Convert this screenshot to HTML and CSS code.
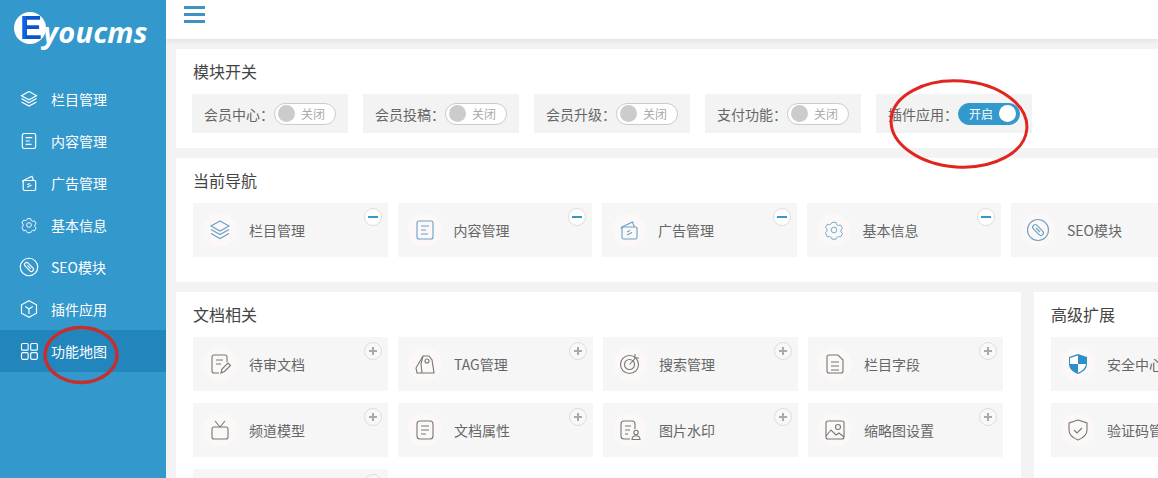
FILE: index.html
```html
<!DOCTYPE html>
<html lang="zh-CN">
<head>
<meta charset="utf-8">
<title>Eyoucms</title>
<link rel="stylesheet" href="styles.css">
</head>
<body>
<svg class="defs" width="0" height="0">
  <symbol id="i-layers" viewBox="0 0 24 24"><path d="M12 3 21 8 12 13 3 8Z"/><path d="M3 11.500 12 16.500 21 11.500"/><path d="M3 15.500 12 20.500 21 15.500"/></symbol>
  <symbol id="i-doc" viewBox="0 0 24 24"><rect x="4" y="3" width="16" height="18" rx="2"/><path d="M8 8h8M8 12h5M8 16h7"/></symbol>
  <symbol id="i-ad" viewBox="0 0 24 24"><path d="M4 9.500 15.500 4l2 5"/><path d="M4 9.500 5 11"/><rect x="5" y="9" width="15" height="12" rx="1.500"/><path d="M10 17l5-2.500M10 14l3-1.500"/></symbol>
  <symbol id="i-gear" viewBox="0 0 24 24"><g transform="translate(2.400 2.400) scale(.8)"><path d="M9.500 3h5l.8 2.600 2.300 1.300 2.700-.6 2.400 4.200-1.900 1.500v3l1.900 2-2.400 4.200-2.700-.6-2.300 1.300-.8 2.100h-5l-.8-2.100-2.300-1.300-2.700.6L1.300 16l1.900-2v-3l-1.900-1.500 2.400-4.200 2.700.6 2.300-1.300Z" transform="translate(0 -.5)"/><circle cx="12" cy="12" r="3.500"/></g></symbol>
  <symbol id="i-seo" viewBox="0 0 24 24"><circle cx="12" cy="12" r="10.500"/><rect x="5.500" y="9.500" width="13" height="5" rx="2.500" transform="rotate(45 12 12)"/><path d="M10 10l4 4"/></symbol>
  <symbol id="i-cube" viewBox="0 0 24 24"><path d="M12 2 21 7v10l-9 5-9-5V7Z"/><path d="M7.500 9 12 12l4.500-3M12 12v6"/></symbol>
  <symbol id="i-grid" viewBox="0 0 24 24"><rect x="3" y="3" width="8" height="8" rx="1.500"/><rect x="14" y="3" width="8" height="8" rx="1.500"/><rect x="3" y="14" width="8" height="8" rx="1.500"/><rect x="14" y="14" width="8" height="8" rx="1.500"/></symbol>
  <symbol id="i-edit" viewBox="0 0 24 24"><path d="M11 21H6a2 2 0 0 1-2-2V5a2 2 0 0 1 2-2h11a2 2 0 0 1 2 2v5"/><path d="M8 8h7M8 12h5"/><path d="M13 21l1-4 6-6 2.500 2.500-6 6Z"/></symbol>
  <symbol id="i-tag" viewBox="0 0 24 24"><path d="M10 4h6l3 4 2 13H4L3 16Z"/><circle cx="14" cy="9" r="2"/><path d="M10 4 8 12l1 9"/></symbol>
  <symbol id="i-target" viewBox="0 0 24 24"><circle cx="11.500" cy="12.500" r="9"/><circle cx="11.500" cy="12.500" r="5"/><path d="M11.500 12.500 18 5.500M17 2v4h4"/></symbol>
  <symbol id="i-file" viewBox="0 0 24 24"><path d="M6 3h9l5 5v11a2 2 0 0 1-2 2H6a2 2 0 0 1-2-2V5a2 2 0 0 1 2-2Z"/><path d="M8 10h8M8 14h8M8 18h8"/></symbol>
  <symbol id="i-tv" viewBox="0 0 24 24"><rect x="4" y="9" width="16" height="12" rx="2"/><path d="M7 3l5 6 5-6"/></symbol>
  <symbol id="i-attr" viewBox="0 0 24 24"><rect x="4" y="3" width="16" height="18" rx="3"/><path d="M8 8h8M8 12h8M8 16h5"/></symbol>
  <symbol id="i-mark" viewBox="0 0 24 24"><path d="M12 21H6a3 3 0 0 1-3-3V6a3 3 0 0 1 3-3h8a3 3 0 0 1 3 3v5"/><path d="M7 8h6M7 12h5M7 16h3"/><circle cx="18" cy="14.500" r="2.200"/><path d="M14 21.500c0-5 8-5 8 0Z"/></symbol>
  <symbol id="i-image" viewBox="0 0 24 24"><rect x="3" y="3" width="18" height="18" rx="2"/><circle cx="15" cy="9" r="2.500"/><path d="M3 18l5-6 5 5 3-2 5 4"/></symbol>
  <symbol id="i-check" viewBox="0 0 24 24"><path d="M12 2 21 5v7c0 5-4 8-9 10-5-2-9-5-9-10V5Z"/><path d="M8 12l3 3 5-5"/></symbol>
</svg>

<div class="app">
  <aside class="sidebar">
    <div class="logo"><span class="logo-circle"><span class="logo-e">E</span></span><span class="logo-text">youcms</span></div>
    <nav class="menu">
      <a class="menu-item"><svg class="menu-icon"><use href="#i-layers"/></svg>栏目管理</a>
      <a class="menu-item"><svg class="menu-icon"><use href="#i-doc"/></svg>内容管理</a>
      <a class="menu-item"><svg class="menu-icon"><use href="#i-ad"/></svg>广告管理</a>
      <a class="menu-item"><svg class="menu-icon"><use href="#i-gear"/></svg>基本信息</a>
      <a class="menu-item"><svg class="menu-icon"><use href="#i-seo"/></svg>SEO模块</a>
      <a class="menu-item"><svg class="menu-icon"><use href="#i-cube"/></svg>插件应用</a>
      <a class="menu-item active"><svg class="menu-icon"><use href="#i-grid"/></svg>功能地图</a>
    </nav>
  </aside>

  <main class="main">
    <header class="topbar"><span class="burger"><i></i><i></i><i></i></span></header>
    <div class="content">
      <section class="panel panel-switch">
        <h2 class="title">模块开关</h2>
        <div class="switch-row">
          <div class="switch-item">会员中心：<span class="toggle"><b></b>关闭</span></div>
          <div class="switch-item">会员投稿：<span class="toggle"><b></b>关闭</span></div>
          <div class="switch-item">会员升级：<span class="toggle"><b></b>关闭</span></div>
          <div class="switch-item">支付功能：<span class="toggle"><b></b>关闭</span></div>
          <div class="switch-item">插件应用：<span class="toggle on">开启<b></b></span></div>
        </div>
      </section>

      <section class="panel panel-nav">
        <h2 class="title">当前导航</h2>
        <div class="cards blue">
          <div class="card"><span class="badge minus"></span><span class="circle"><svg class="card-icon"><use href="#i-layers"/></svg></span>栏目管理</div>
          <div class="card"><span class="badge minus"></span><span class="circle"><svg class="card-icon"><use href="#i-doc"/></svg></span>内容管理</div>
          <div class="card"><span class="badge minus"></span><span class="circle"><svg class="card-icon"><use href="#i-ad"/></svg></span>广告管理</div>
          <div class="card"><span class="badge minus"></span><span class="circle"><svg class="card-icon"><use href="#i-gear"/></svg></span>基本信息</div>
          <div class="card"><span class="badge minus"></span><span class="circle"><svg class="card-icon"><use href="#i-seo"/></svg></span>SEO模块</div>
        </div>
      </section>

      <div class="split">
        <section class="panel panel-docs">
          <h2 class="title">文档相关</h2>
          <div class="cards">
            <div class="card"><span class="badge plus"></span><span class="circle"><svg class="card-icon"><use href="#i-edit"/></svg></span>待审文档</div>
            <div class="card"><span class="badge plus"></span><span class="circle"><svg class="card-icon"><use href="#i-tag"/></svg></span>TAG管理</div>
            <div class="card"><span class="badge plus"></span><span class="circle"><svg class="card-icon"><use href="#i-target"/></svg></span>搜索管理</div>
            <div class="card"><span class="badge plus"></span><span class="circle"><svg class="card-icon"><use href="#i-file"/></svg></span>栏目字段</div>
            <div class="card"><span class="badge plus"></span><span class="circle"><svg class="card-icon"><use href="#i-tv"/></svg></span>频道模型</div>
            <div class="card"><span class="badge plus"></span><span class="circle"><svg class="card-icon"><use href="#i-attr"/></svg></span>文档属性</div>
            <div class="card"><span class="badge plus"></span><span class="circle"><svg class="card-icon"><use href="#i-mark"/></svg></span>图片水印</div>
            <div class="card"><span class="badge plus"></span><span class="circle"><svg class="card-icon"><use href="#i-image"/></svg></span>缩略图设置</div>
            <div class="card"><span class="badge plus"></span><span class="circle"></span></div>
          </div>
        </section>
        <section class="panel panel-adv">
          <h2 class="title">高级扩展</h2>
          <div class="cards">
            <div class="card"><span class="circle"><svg class="card-icon shield" viewBox="0 0 24 24"><path class="s-blue" d="M12 2 21 5v7c0 5-4 8-9 10-5-2-9-5-9-10V5Z"/><path class="s-white" d="M12 3.500v8.500H4V6ZM12 12h8c-.5 4-4 7-8 8.800Z"/></svg></span>安全中心</div>
            <div class="card"><span class="circle"><svg class="card-icon"><use href="#i-check"/></svg></span>验证码管理</div>
          </div>
        </section>
      </div>
    </div>
  </main>
</div>

<svg class="mark mark-menu" viewBox="0 0 80 60"><ellipse cx="40" cy="30" rx="36" ry="27.500"/></svg>
<svg class="mark mark-switch" viewBox="0 0 142 92"><ellipse cx="71" cy="46" rx="68" ry="43" transform="rotate(4 71 46)"/></svg>
</body>
</html>
```
FILE: styles.css
```css
* { box-sizing: border-box; }
html, body { margin: 0; height: 100%; overflow: hidden; }
body { font-family: "Noto Sans CJK SC", "Noto Sans", sans-serif; font-size: 14px; color: #666; background: #f3f3f3; }
.defs { position: absolute; }
.app { display: flex; height: 478px; overflow: hidden; }

.sidebar { flex: 0 0 166px; background: #3398cc; color: #fff; }
.logo { display: flex; align-items: center; height: 78px; padding: 0 0 22px 14px; }
.logo-circle { flex: none; width: 32px; height: 32px; border-radius: 50%; background: #fff; }
.logo-e { display: block; width: 34px; padding-left: 6px; font: 900 33px/32px "Liberation Sans", sans-serif; color: transparent; background: linear-gradient(90deg, #0a3fb8 0 7px, #0d66e0 7px 12px, #0a55cc 12px); -webkit-background-clip: text; background-clip: text; }
.logo-text { margin-left: -3px; padding-top: 7px; font: italic 700 29px/32px "Open Sans", sans-serif; letter-spacing: .2px; }
.menu { display: flex; flex-direction: column; }
.menu-item { display: flex; align-items: center; height: 42px; padding-left: 19px; gap: 12px; }
.menu-item.active { background: #2285bb; }
.menu-icon { width: 20px; height: 20px; fill: none; stroke: #fff; stroke-width: 1.400; }

.main { flex: 1; min-width: 0; overflow: hidden; }
.topbar { height: 39px; background: #fff; padding: 6px 0 0 18px; box-shadow: 0 1px 6px rgba(0,0,0,.1); position: relative; }
.burger { display: flex; flex-direction: column; gap: 4px; width: 21px; }
.burger i { height: 3px; background: #3f93c2; }
.content { width: 1260px; padding: 10px 0 0 10px; display: flex; flex-direction: column; gap: 10px; }
.panel { background: #fff; padding: 10px 17px 0; }
.title { margin: 0 0 11px; font-size: 16px; font-weight: 400; line-height: 24px; color: #444; }
.panel-switch { height: 99px; }
.panel-nav { height: 124px; }
.switch-row { display: flex; gap: 15px; margin-left: -1px; }
.switch-item { display: flex; align-items: center; width: 156px; height: 39px; padding-left: 12px; background: #f3f3f3; color: #666; }
.toggle { display: flex; align-items: center; gap: 6px; width: 62px; height: 22px; padding: 0 3px; border: 1px solid #ccc; border-radius: 11px; background: #fff; color: #aaa; font-size: 12px; }
.toggle b { width: 17px; height: 17px; border-radius: 50%; background: #ccc; }
.toggle.on { justify-content: flex-end; border-color: #3398cc; background: #3398cc; color: #fff; }
.toggle.on b { background: #fff; }

.cards { display: flex; flex-wrap: wrap; gap: 12px 10px; }
.card { position: relative; display: flex; align-items: center; gap: 12px; flex: 0 0 194.500px; height: 54px; padding-left: 10px; background: #f6f6f6; color: #666; }
.panel-docs .card { flex-basis: 195px; }
.circle { display: flex; align-items: center; justify-content: center; width: 34px; height: 34px; border-radius: 50%; background: #fbf8f7; }
.card-icon { width: 24px; height: 24px; fill: none; stroke: #777; stroke-width: 1.100; }
.blue .card-icon { stroke: #6a9fc8; }
.badge { position: absolute; top: 5px; right: 6px; width: 18px; height: 18px; border-radius: 50%; background: #fff; border: 1px solid #ddd; }
.badge::before { content: ""; position: absolute; left: 3px; top: 7px; width: 10px; height: 2px; background: #3398cc; }
.badge.plus { background: #f8f8f8; }
.badge.plus::before { left: 4px; width: 8px; background: #aaa; }
.badge.plus::after { content: ""; position: absolute; left: 7px; top: 4px; width: 2px; height: 8px; background: #aaa; }

.split { display: flex; gap: 13px; }
.panel-docs { flex: 0 0 845px; height: 200px; }
.panel-adv { flex: 1; height: 200px; }
.shield .s-blue { fill: #2f8fc8; stroke: none; }
.shield .s-white { fill: #fff; stroke: none; }

.mark { position: absolute; fill: none; }
.mark ellipse { fill: none; }
.mark-menu { left: 41px; top: 325px; width: 80px; height: 60px; stroke: #c5302f; stroke-width: 3.500; }
.mark-switch { left: 888px; top: 78px; width: 142px; height: 92px; stroke: #e0261f; stroke-width: 3; }
```
